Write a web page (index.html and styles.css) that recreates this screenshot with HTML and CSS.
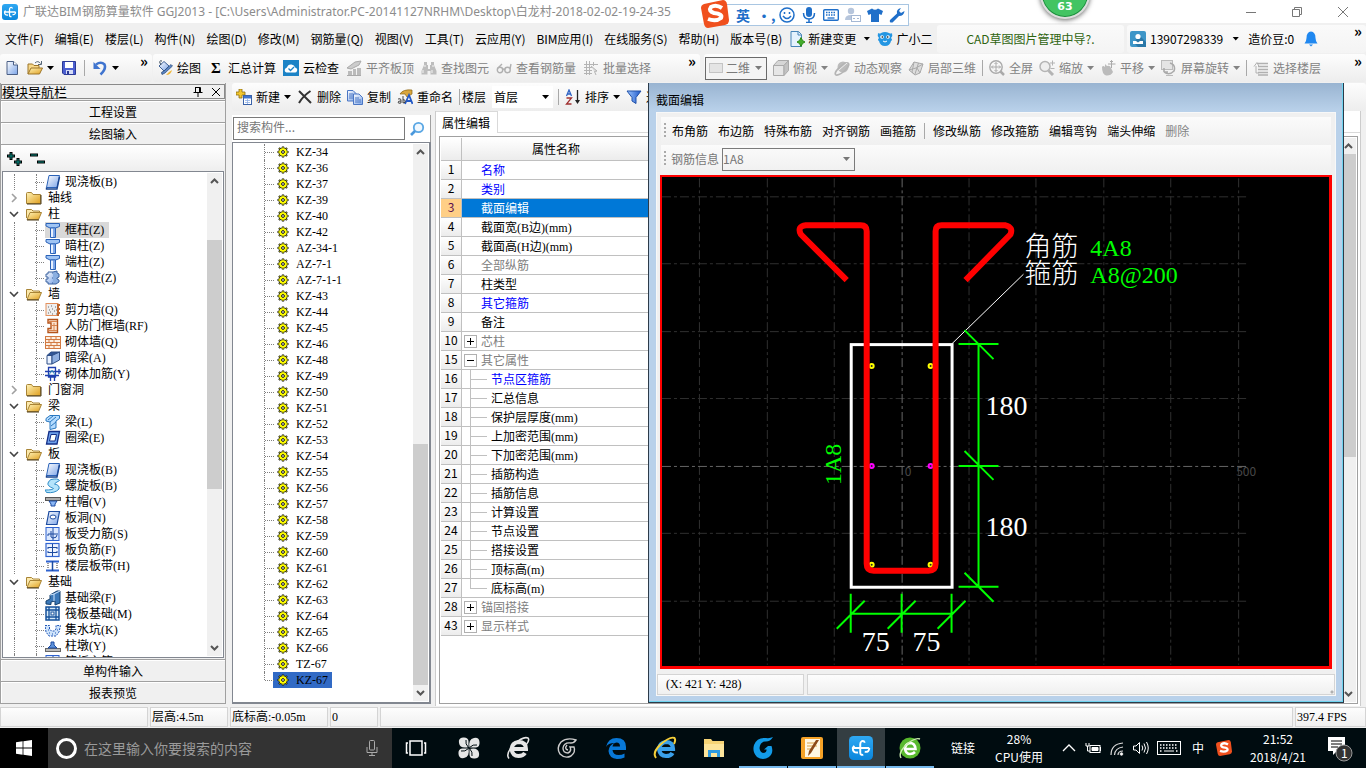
FILE: index.html
```html
<!DOCTYPE html>
<html lang="zh-CN">
<head>
  <meta charset="utf-8">
  <title>广联达BIM钢筋算量软件 GGJ2013</title>
  <link rel="stylesheet" href="styles.css">
</head>
<body>
  <!-- icon sheet -->
  <svg class="sheet" aria-hidden="true">
    <defs>
      <linearGradient id="gBlue" x1="0" y1="0" x2="1" y2="1"><stop offset="0" stop-color="#fff"/><stop offset="1" stop-color="#7ba4e8"/></linearGradient>
      <linearGradient id="gGold" x1="0" y1="0" x2="1" y2="1"><stop offset="0" stop-color="#fff3b8"/><stop offset="1" stop-color="#e0a020"/></linearGradient>
      <linearGradient id="gApp" x1="0" y1="0" x2="0" y2="1"><stop offset="0" stop-color="#2fa8f2"/><stop offset="1" stop-color="#0a86dc"/></linearGradient>
      <linearGradient id="gFun" x1="0" y1="0" x2="1" y2="0"><stop offset="0" stop-color="#9cc6ff"/><stop offset="1" stop-color="#1c56c8"/></linearGradient>
      <linearGradient id="gGray" x1="0" y1="0" x2="1" y2="1"><stop offset="0" stop-color="#eee"/><stop offset="1" stop-color="#bbb"/></linearGradient>
    </defs>
    <symbol id="app" viewBox="0 0 16 16"><rect width="16" height="16" rx="3" fill="url(#gApp)"/><path d="M10.500 4.500Q10 3 8.500 3.500Q7.500 4 7.500 5.500V11Q7.500 13 9.500 12.500M2.500 8H13.500M3.500 6.500L2.500 8Q2.500 11.500 6 11M13.500 8Q13.500 11 10.500 10.500" fill="none" stroke="#fff" stroke-width="1.300"/></symbol>
    <symbol id="new" viewBox="0 0 16 16"><path d="M3 1.500H9.500L13.500 5V14.500H3Z" fill="url(#gBlue)" stroke="#4a5f86"/><path d="M9.500 1.500V5H13.500" fill="#fff" stroke="#4a5f86"/></symbol>
    <symbol id="open" viewBox="0 0 16 16"><path d="M1 14V4H5.500L7 5.500H12V8" fill="#f7d88a" stroke="#9c7428"/><path d="M1 14L4 8H15.500L12.500 14Z" fill="url(#gGold)" stroke="#9c7428"/><path d="M8 3Q11 0 13.500 3.500M14.500 1V4.500H11" fill="none" stroke="#567"/></symbol>
    <symbol id="save" viewBox="0 0 16 16"><path d="M1.500 1.500H14.500V14.500H3L1.500 13Z" fill="#4c5fd0" stroke="#2b3a96"/><rect x="4" y="2" width="8" height="6" fill="#fff"/><rect x="5" y="10" width="7" height="4" fill="#d5dcf6"/><rect x="6" y="11" width="2" height="3" fill="#2b3a96"/></symbol>
    <symbol id="undo" viewBox="0 0 16 16"><path d="M4 4.500Q9 1 12.500 4.500Q14.500 9 8.500 14.500" fill="none" stroke="#3f74cf" stroke-width="2.600"/><path d="M1.500 2V9H8.500Z" fill="#3f74cf"/></symbol>
    <symbol id="paint" viewBox="0 0 16 16"><path d="M2 6L7 1.500L12 6L7 11Z" fill="url(#gBlue)" stroke="#3c5f95"/><path d="M4 5Q1 0 5 1" fill="none" stroke="#345"/><path d="M7 11Q3 12 5 14.500L8 13L15.500 6L14 4.500Z" fill="#5b87c8" stroke="#2c4770" stroke-width=".7"/><path d="M9 15Q14 15 15 10L12 12Z" fill="#f0b83a"/></symbol>
    <symbol id="cloud" viewBox="0 0 16 16"><rect width="16" height="16" fill="#1c83c6"/><path d="M3.500 12.500Q1 11.500 2 9Q3 7.500 4 7.500Q5 4 8.500 4.500Q11.500 5 12 7.500Q15 8.500 14 11Q13.500 12.500 12 12.500Z" fill="#fff"/><path d="M5.500 8.500L7.500 10.500L11 7" fill="none" stroke="#1c83c6" stroke-width="1.300"/></symbol>
    <symbol id="align" viewBox="0 0 16 16"><path d="M1 8L9 2L15 1L13 5L5 9Z" fill="#ccc" stroke="#aaa"/><path d="M2 11H6V15H2ZM7 9H10V15H7ZM11 8H15V15H11Z" fill="#bbb"/><path d="M1 15.500H15" stroke="#aaa"/></symbol>
    <symbol id="binoc" viewBox="0 0 16 16" fill="#bdbdbd"><path d="M3 2H6V5H7V9H9V5H10V2H13V5L15.500 11V14.500H9.500V11H6.500V14.500H.5V11L3 5Z"/><path d="M2 10V13M11 10V13M4 5V7M12 5V7" stroke="#f4f4f4"/></symbol>
    <symbol id="glasses" viewBox="0 0 16 16" fill="none" stroke="#b0b0b0" stroke-width="1.400"><circle cx="4" cy="10" r="2.700"/><circle cx="11.500" cy="10" r="2.700"/><path d="M6.500 10Q8 8 9 10M2 8L6 4M14 9L15 4"/></symbol>
    <symbol id="batch" viewBox="0 0 16 16" fill="none" stroke="#b4b4b4"><path d="M3.500 1V15M6.500 1V15M1 4.500H15M1 7.500H9M1 10.500H9M1 13.500H9M10.500 2V6"/><path d="M8 6L14 11L11.500 11.500L13 15" fill="#ddd"/></symbol>
    <symbol id="cube" viewBox="0 0 16 16" stroke="#aaa"><path d="M.5 5.500H11V15.500H.5Z" fill="#e6e6e6"/><path d="M.5 5.500L5 .5H15.500L11 5.500Z" fill="#d6d6d6"/><path d="M11 5.500L15.500 .5V10.500L11 15.500Z" fill="#c2c2c2"/></symbol>
    <symbol id="orbit" viewBox="0 0 16 16"><circle cx="9" cy="7" r="5.500" fill="#bcbcbc"/><ellipse cx="8" cy="9" rx="8.500" ry="3" transform="rotate(-42 8 9)" fill="none" stroke="#b4b4b4" stroke-width="1.600"/><path d="M5 10L13 3" stroke="#eee"/></symbol>
    <symbol id="mesh" viewBox="0 0 16 16" fill="#ddd" stroke="#aaa"><path d="M1 10L6 2L15 4L12 13L7 15Z"/><path d="M6 2L4 12L7 15M10.500 3L7 14M15 4L8 8L1 10M12 13L9 8"/></symbol>
    <symbol id="full" viewBox="0 0 16 16" fill="none" stroke="#aaa"><circle cx="7" cy="7" r="6.200" stroke-width="1.400"/><path d="M7 2.500V11.500M2.500 7H11.500M5.500 4L7 2.500L8.500 4M5.500 10L7 11.500L8.500 10M4 5.500L2.500 7L4 8.500M10 5.500L11.500 7L10 8.500"/><path d="M11.500 11.500L15 15" stroke-width="2.500"/></symbol>
    <symbol id="zoomi" viewBox="0 0 16 16" fill="none" stroke="#b4b4b4"><circle cx="6" cy="6.500" r="5" stroke-width="1.500" fill="#eee"/><path d="M9.500 10.500L14 15" stroke-width="3"/><path d="M11 3H16M13.500 .5V5.500M11.500 8.500H15.500"/></symbol>
    <symbol id="pan" viewBox="0 0 16 16"><path d="M2 7Q3 5 5 7L5 4L7 6Q10 5 11 8L13 12Q11 16 6 15.500Q2 14 2 7Z" fill="#bbb"/><path d="M11.500 .5V8M8 4H15.500M10 2L11.500 .5L13 2" fill="none" stroke="#aaa"/></symbol>
    <symbol id="rot" viewBox="0 0 16 16"><rect x=".5" y=".5" width="11" height="9" fill="#e4e4e4" stroke="#bbb"/><path d="M3 12Q8 16 13 11Q15 5 9 3M3 12V8M3 12H7" fill="none" stroke="#aaa" stroke-width="1.600"/><path d="M5 15.500H12" stroke="#bbb"/></symbol>
    <symbol id="floors" viewBox="0 0 16 16" fill="none" stroke="#b0b0b0"><path d="M5 3.500H15M5 6.500H15M5 9.500H15M5 12.500H15M5 15H15" stroke-width="1.500"/><path d="M1 6.500L4 2.500L6 6.500M3 6V13H6"/></symbol>
    <symbol id="addnew" viewBox="0 0 16 16"><path d="M3 0H6V3H9V6H6V9H3V6H0V3H3Z" fill="#f2c72e" stroke="#8d6c10" stroke-width=".8"/><rect x="7.500" y="6.500" width="8" height="9" fill="#fff" stroke="#3a62a8"/><path d="M8 7H15V9.500H8Z" fill="#3f74cf"/><path d="M9 11.500H14M9 13.500H14M11.500 10V15" stroke="#8fb0e6" stroke-width=".8"/></symbol>
    <symbol id="cross" viewBox="0 0 16 16"><path d="M2 2L14 14M13.500 2Q6 7 2 14" fill="none" stroke="#333" stroke-width="2"/></symbol>
    <symbol id="copy" viewBox="0 0 16 16" stroke="#4a76c4"><path d="M.5 1.500H6L9 4.500V12H.5Z" fill="url(#gBlue)"/><path d="M6.500 5H12L15.500 8.500V15.500H6.500Z" fill="url(#gBlue)"/><path d="M8 9H12M8 11H14M8 13H14M2 5H6M2 7H6M2 9H6"/></symbol>
    <symbol id="rename" viewBox="0 0 16 16"><path d="M3 5Q6 0 15 1V5L10 8L8 5Z" fill="#d9a63c" stroke="#8a6418" stroke-width=".7"/><path d="M8 15L12 6L15.500 15M9.500 12H14" fill="none" stroke="#2459c5" stroke-width="1.800"/><path d="M1 10Q4 9 4 11V14Q1 15 1 13Q1 12 4 12M6 7V14Q9 14 8 11.500Q7 10 6 11" fill="none" stroke="#333" stroke-width=".9"/></symbol>
    <symbol id="az" viewBox="0 0 16 16" fill="none"><path d="M1.500 7L4 1L6.500 7M2.500 5H5.500" stroke="#2d62c4" stroke-width="1.300"/><path d="M1.500 9H6.500L1.500 15H6.500" stroke="#a03030" stroke-width="1.300"/><path d="M12.500 1V13" stroke="#222" stroke-width="1.300"/><path d="M10 11H15L12.500 15Z" fill="#222"/></symbol>
    <symbol id="funnel" viewBox="0 0 16 16"><path d="M1 2H15L10 8.500V14.500L6 12V8.500Z" fill="url(#gFun)" stroke="#2050a8"/></symbol>
    <symbol id="search" viewBox="0 0 16 16" fill="none"><circle cx="9.500" cy="6.500" r="4.700" stroke="#5aa7e4" stroke-width="1.800" fill="#f0f8ff"/><path d="M6 10L2 14" stroke="#4a98dc" stroke-width="2.600"/></symbol>
    <symbol id="fclosed" viewBox="0 0 16 16"><path d="M.5 3.500Q.5 2.500 1.500 2.500H5.500L7 4.500H14.500V13.500H.5Z" fill="url(#gGold)" stroke="#a88436"/><path d="M15 5V14H1" fill="none" stroke="#4a3a18"/></symbol>
    <symbol id="fopen" viewBox="0 0 16 16"><path d="M.5 12V3.500H5.500L7 5H13.500V7" fill="#fce9ac" stroke="#a88436"/><path d="M1 13.500L4 6.500H15.500L12.500 13.500Z" fill="url(#gGold)" stroke="#a88436"/><path d="M1 14H13" stroke="#4a3a18"/></symbol>
    <symbol id="slab" viewBox="0 0 16 16"><path d="M4 1.500H14.500L12 13.500H1.500Z" fill="url(#gBlue)" stroke="#2a62b8"/><path d="M1.500 13.500V15H12L14.500 3" fill="none" stroke="#1a4590" stroke-width="1.400"/></symbol>
    <symbol id="col" viewBox="0 0 16 16"><path d="M1 1.500H14.500V4.500L10.500 6H5L1 4Z" fill="#9fc4f4" stroke="#2a62b8"/><path d="M5.500 6H10.500V15.500H5.500Z" fill="#e8f1ff" stroke="#2a62b8"/><path d="M9 6V15" stroke="#5c8fe0" stroke-width="1.500"/></symbol>
    <symbol id="gz" viewBox="0 0 16 16" stroke="#3a62a0" fill="url(#gBlue)"><path d="M3 2H8V4H10V7H8V9H10V12H8V14H3V12H1V9H3V7H1V4H3Z"/><path d="M8 2L12 1V3L14 4V7L12 8V9L14 10V12L11 14H8" fill="#8aaee0"/></symbol>
    <symbol id="wallq" viewBox="0 0 16 16"><rect x="1" y="1.500" width="12" height="12" fill="#eee" stroke="#e4915e"/><path d="M3 5H4M6 4H7M10 5H11M4 8H5M7 7H8M9 9H10M3 11H4M5 10H6M7 12H8M11 12H12M11 8H12" stroke="#666"/><path d="M13 2V14M14 3H15M14 7H15M14 11H15" stroke="#c0652c" stroke-width="2"/></symbol>
    <symbol id="wallrf" viewBox="0 0 16 16"><path d="M3 1.500H12.500V14.500H3V10.500H6V5H3Z" fill="#fbe3cf" stroke="#b4541c" stroke-width="1.400"/><path d="M6 7.500H12M3 12.500H12M3 3.500H12M9 5V7M9 8V12" stroke="#d98550"/></symbol>
    <symbol id="brick" viewBox="0 0 16 16"><rect x=".5" y="2.500" width="15" height="12" fill="#fdeee0" stroke="#d27a42"/><path d="M1 5.500H15M1 8.500H15M1 11.500H15M6 3V5M11 3V5M4 6V8M9 6V8M6 9V11M12 9V11M4 12V14M9 12V14" stroke="#d27a42"/></symbol>
    <symbol id="beama" viewBox="0 0 16 16" stroke="#2f4f86"><path d="M2 5.500L6 2H14.500L10 5.500Z" fill="#2f5596"/><path d="M2 5.500H7V14H2Z" fill="#eaf2ff"/><path d="M7 5.500L14.500 2V10L7 14Z" fill="#8eaee0"/></symbol>
    <symbol id="rebar" viewBox="0 0 16 16" fill="none" stroke="#1e3fae"><path d="M3.500 1.500H10.500V11H3.500ZM0 5.500H16M0 9.500H14M5.500 11V15M9.500 11V15M14 3V8" stroke-width="1.300"/><path d="M4 9L7 4L10 9" stroke="#49b"/></symbol>
    <symbol id="beaml" viewBox="0 0 16 16"><path d="M1 4.500L5 1.500H14.500V4.500L11 7V14L5 15.500V8L1 7Z" fill="#b5dcff" stroke="#2a78c0"/><path d="M5 8L11 3M6 12L11 8M3 6L8 2" stroke="#2a78c0"/></symbol>
    <symbol id="ring" viewBox="0 0 16 16"><path d="M4 1.500H14.500L12 14H1.500Z" fill="#6ea0ea" stroke="#142f88" stroke-width="1.300"/><path d="M6 4.500H11.500L10 11H4.500Z" fill="#fff" stroke="#142f88"/></symbol>
    <symbol id="spiral" viewBox="0 0 16 16"><path d="M6 1.500Q13 0 14.500 2.500Q10 5 9.500 6Q15 7 14 11Q10 15.500 1.500 14.500L0 12Q8 12 8.500 10.500Q2 8 3 5Q4 2.500 6 1.500Z" fill="#b4e4fb" stroke="#2f8cc8"/></symbol>
    <symbol id="cap" viewBox="0 0 16 16"><rect x=".5" y="3.500" width="15" height="3" fill="#aaa" stroke="#555"/><path d="M4 7H12L10 10V12H6V10Z" fill="#8ab6f4" stroke="#1c4ba0"/></symbol>
    <symbol id="hole" viewBox="0 0 16 16"><path d="M4 1.500H14.500L12 14.500H1.500Z" fill="url(#gBlue)" stroke="#1c4ba0" stroke-width="1.200"/><ellipse cx="8" cy="7" rx="3" ry="2" fill="#fff" stroke="#1c4ba0"/></symbol>
    <symbol id="stress" viewBox="0 0 16 16"><rect x="1" y="1.500" width="13" height="13" fill="#dce9ff" stroke="#2f63d0"/><path d="M8 2V14M3 8H13M3 8V10M6 5V8Q5 12 8 12Q12 12 12 9" fill="none" stroke="#1c4ba0"/></symbol>
    <symbol id="neg" viewBox="0 0 16 16"><rect x="1" y="1.500" width="13" height="13" fill="#eef4ff" stroke="#2f63d0" stroke-width="1.200"/><path d="M7.500 2V14M3 5.500H12M3 10.500H12M3 5V7M12 5V7M3 9V11M12 9V11" stroke="#1c4ba0"/></symbol>
    <symbol id="band" viewBox="0 0 16 16"><path d="M1 3.500H14M1 12.500H14" stroke="#2f63d0" stroke-width="2"/><path d="M7.500 3V13" stroke="#1c4ba0" stroke-width="1.500"/><path d="M3 5V11M12 5V11" stroke="#333" stroke-dasharray="1 1"/></symbol>
    <symbol id="found" viewBox="0 0 16 16"><path d="M1 14V11L5 9V5L12 1H15V13L10 15V11L6 12V14.500Z" fill="#3b78b8" stroke="#14406e"/><path d="M5 5L9 4V11M9 4L15 1" fill="none" stroke="#cfe6ff"/></symbol>
    <symbol id="raft" viewBox="0 0 16 16"><rect x="1" y="1" width="13" height="13" fill="#d7ebf8" stroke="#14509a" stroke-width="1.500"/><path d="M4 1V14M11 1V14M1 4H14M1 11H14" stroke="#14509a" stroke-width="1.300"/><rect x="6" y="6" width="3" height="3" fill="#fff" stroke="#14509a"/></symbol>
    <symbol id="pit" viewBox="0 0 16 16"><path d="M0 3.500H4.500V7L6.500 9H9.500L11 7V3.500H15.500L14 10L11 14H4L1 10Z" fill="#cfe4fb" stroke="#2358b8" stroke-dasharray="2 1"/><path d="M4 11H5M7 12H8M10 11H11M3 8H4M12 8H13" stroke="#2358b8"/></symbol>
    <symbol id="pier" viewBox="0 0 16 16"><rect x=".5" y="10.500" width="15" height="3" fill="#bbb" stroke="#666"/><path d="M3 10L6 7V4H9V7L12 10Z" fill="#5c90d8" stroke="#1c4ba0"/></symbol>
    <symbol id="gear" viewBox="0 0 12 12"><path d="M6 .5V11.500M.5 6H11.500M2 2L10 10M10 2L2 10" stroke="#111" stroke-width="2.200"/><circle cx="6" cy="6" r="4.200" fill="#ff0" stroke="#222" stroke-width=".9"/><path d="M6 1V11M1 6H11M2.500 2.500L9.500 9.500M9.500 2.500L2.500 9.500" stroke="#ff0" stroke-width=".9"/><circle cx="6" cy="6" r="1.400" fill="#fff" stroke="#111"/></symbol>
    <symbol id="sogou" viewBox="0 0 28 28"><path d="M3 4L22 0Q25 0 26 4L28 20Q28 24 24 25L7 28Q4 28 3 24L0 8Q0 5 3 4Z" fill="#f0501e"/><path d="M21 8Q15 4 10 7Q7 11 13 13Q22 14 20 18Q15 22 7 19" fill="none" stroke="#fff" stroke-width="4"/></symbol>
    <symbol id="smile" viewBox="0 0 16 16" fill="none" stroke="#1f6fc9" stroke-width="1.500"><circle cx="8" cy="8" r="7"/><path d="M4 9Q8 14 12 9M5.500 5V7M10.500 5V7"/></symbol>
    <symbol id="mic" viewBox="0 0 16 16"><rect x="5" y="0" width="6" height="10" rx="3" fill="#1f6fc9"/><path d="M2.500 6Q2.500 12 8 12Q13.500 12 13.500 6M8 12V15.500M5 15.500H11" fill="none" stroke="#1f6fc9" stroke-width="1.500"/></symbol>
    <symbol id="kbd" viewBox="0 0 16 16"><rect x=".7" y="2.700" width="14.600" height="10.600" rx="1" fill="#fff" stroke="#1f6fc9" stroke-width="1.400"/><path d="M3 5.500H13M3 8H13" stroke="#1f6fc9" stroke-width="1.500" stroke-dasharray="1.500 1"/><path d="M4.500 11H11.500" stroke="#1f6fc9" stroke-width="1.300"/></symbol>
    <symbol id="person" viewBox="0 0 16 16"><circle cx="6" cy="4" r="3.200" fill="#b7c6dc"/><path d="M0 13Q0 8 6 8Q9 8 10 9V13Z" fill="#b7c6dc"/><rect x="6.500" y="8.500" width="9" height="6" fill="#fff" stroke="#a5b8d4"/><path d="M8 11.500H10M12 11.500H14" stroke="#a5b8d4"/></symbol>
    <symbol id="shirt" viewBox="0 0 16 16"><path d="M5 1.500Q8 4 11 1.500L16 4L14.500 8L12 7V15H4V7L1.500 8L0 4Z" fill="#1f6fc9"/></symbol>
    <symbol id="wrench" viewBox="0 0 16 16"><path d="M1 13L8 6.500Q7 2 12 1L10 4L12 6L15.500 4Q15 9 10 9L3.500 15.500Q0 16 1 13Z" fill="#1f6fc9"/></symbol>
    <symbol id="docadd" viewBox="0 0 16 16"><path d="M2 .5H9.500L12.500 3.500V15.500H2Z" fill="#e5f2fd" stroke="#4784b8"/><path d="M9 .5V4H12.500" fill="none" stroke="#4784b8"/><path d="M12 6.500L13.500 9.500L16 11L13.500 12.500L12 15.500L10.500 12.500L8 11L10.500 9.500Z" fill="#44ac2c" stroke="#2c8a18" stroke-width="1"/></symbol>
    <symbol id="owl" viewBox="0 0 16 16"><path d="M1 2Q3 3 4 2Q8 0 12 2Q14 3 15 2Q16 5 14 7Q16 9 14 10Q13 15 8 15Q3 15 2 10Q0 9 2 7Q0 5 1 2Z" fill="#2496e2"/><circle cx="5" cy="6" r="1.800" fill="#fff"/><circle cx="11" cy="6" r="1.800" fill="#fff"/><circle cx="5.300" cy="6" r=".8"/><circle cx="10.700" cy="6" r=".8"/><path d="M6 10Q8 12 10 10" stroke="#fff" fill="none"/></symbol>
    <symbol id="user" viewBox="0 0 16 16"><rect width="16" height="16" rx="2" fill="#3e96c8"/><path d="M9 4L16 11V16H8L4 12Z" fill="#2a78a8"/><circle cx="8" cy="5.500" r="2.600" fill="#fff"/><path d="M3 10H6L8 11.500L10 10H13V13H3Z" fill="#fff"/></symbol>
    <symbol id="bell" viewBox="0 0 16 16"><path d="M8 .5Q12.500 1 12.500 7Q12.500 10 14.500 12.500H1.500Q3.500 10 3.500 7Q3.500 1 8 .5Z" fill="#2088f0"/><path d="M6 13.500H10L8 15.500Z" fill="#2088f0"/></symbol>
    <symbol id="up" viewBox="0 0 15 16"><path d="M4 10L7.500 6.500L11 10" fill="none" stroke="#555" stroke-width="2"/></symbol>
    <symbol id="down" viewBox="0 0 15 16"><path d="M4 6L7.500 9.500L11 6" fill="none" stroke="#555" stroke-width="2"/></symbol>
    <symbol id="twOpen" viewBox="0 0 12 12"><path d="M2 4L6 8L10 4" fill="none" stroke="#444" stroke-width="1.600"/></symbol>
    <symbol id="twShut" viewBox="0 0 12 12"><path d="M4 2L8 6L4 10" fill="none" stroke="#a0a0a0" stroke-width="1.600"/></symbol>
    <!-- taskbar -->
    <symbol id="win" viewBox="0 0 16 16" fill="#fff"><path d="M0 2.200L6.600 1.300V7.500H0ZM7.400 1.200L16 0V7.500H7.400ZM0 8.400H6.600V14.700L0 13.800ZM7.400 8.400H16V16L7.400 14.800Z"/></symbol>
    <symbol id="taskview" viewBox="0 0 24 24" fill="none" stroke="#fff" stroke-width="1.500"><rect x="6" y="5" width="12" height="14"/><path d="M4 7H2.500V17H4M20 7H21.500V17H20"/></symbol>
    <symbol id="pinwheel" viewBox="0 0 24 24" fill="#e6e6e6"><path d="M2 7Q1 2 6 1.500Q11 1 11.500 5V11Q3 13 2 7ZM17 2Q22 1 22.500 6Q23 11 19 11.500H12.500Q11 3 17 2ZM22 17Q23 22 18 22.500Q13 23 12.500 19V13Q21 11 22 17ZM7 22Q2 23 1.500 18Q1 13 5 12.500H11.500Q13 21 7 22Z"/><path d="M11.500 11.500Q8 8 9 4M12.500 11.500Q16 8 20 9M12.500 12.500Q16 16 15 20M11.500 12.500Q8 16 4 15" stroke="#000c10" fill="none"/></symbol>
    <symbol id="iew" viewBox="0 0 24 24" fill="none" stroke="#e6e6e6"><path d="M5.500 13H20Q20 6 12.500 6Q6 7 5.500 13Q6.500 20 12.500 20Q17 20 19 17" stroke-width="4"/><path d="M3 22.500Q-1 18 8 8.500Q17 0 22 2Q24 4 20 9" stroke-width="1.600"/></symbol>
    <symbol id="swirl" viewBox="0 0 24 24" fill="none" stroke="#ccc"><path d="M21 4Q12 1 6 6Q1 12 5 18Q10 23 16 20Q21 16 19 11H15Q17 15 13 17Q8 17 8 12Q9 6 16 7Q19 7 21 4Z" stroke-width="1.400"/><path d="M12 9Q9 13 13 14" stroke-width="1.300"/></symbol>
    <symbol id="edge" viewBox="0 0 24 24"><path d="M2 11Q4 2 12.500 2Q22 2 22 11V14H8.500Q9 19 14.500 19Q18 19 20.500 17.500V21.500Q17 23 13 23Q5 22 4.500 15Q5 9 10.500 7Q4 7 2 11ZM8.500 10.500H16Q16 6.500 12.500 6.500Q9 7 8.500 10.500Z" fill="#0878d7"/></symbol>
    <symbol id="ie" viewBox="0 0 24 24" fill="none"><path d="M6 13H20Q20 6 13 6Q6.500 7 6 13Q7 20 13 20Q18 20 19.500 17" stroke="#3aa0ea" stroke-width="4.200"/><path d="M3 22Q-1 17 7 9Q17 0 21.500 2Q23 4 21 8" stroke="#f4cf3a" stroke-width="2"/></symbol>
    <symbol id="files" viewBox="0 0 24 24"><path d="M2 3H9L10.500 5H22V20H2Z" fill="#f6d476"/><path d="M2 8H22V21H2Z" fill="#fde59b"/><path d="M6 21V14H18V21H15V17H9V21Z" fill="#2f9be0"/></symbol>
    <symbol id="gblue" viewBox="0 0 24 24"><path d="M22 1Q19 6 14 5.500Q9 6 8.500 12Q9 17 13 17Q16 16.500 15.500 13.500H13L17 10H20.500Q23 17 18 21Q12 25 6 21Q1 16 3 9Q6 1 15 2Q19 2.500 22 1Z" fill="#129be8"/></symbol>
    <symbol id="notes" viewBox="0 0 24 24"><rect x="1" y="1" width="22" height="22" rx="2" fill="#f6a327"/><rect x="5" y="3" width="15" height="18" fill="#fff8e4"/><path d="M7 7H17M7 10H17M7 13H12" stroke="#d9a24a"/><path d="M19 4L11 17L8 20L9 15L16 4Z" fill="#8c4a1a"/></symbol>
    <symbol id="egreen" viewBox="0 0 24 24" fill="none"><circle cx="12" cy="12" r="10.500" fill="#58b92c"/><path d="M7 13H17.500Q17 7 12 7Q7 8 7 13Q8 18 12 18Q15 18 17 16" stroke="#fff" stroke-width="2.600"/><path d="M3 22Q0 17 8 9Q17 1 22 3" stroke="#cdeeb0" stroke-width="1.400"/></symbol>
    <symbol id="battery" viewBox="0 0 16 16" fill="none" stroke="#fff"><rect x="5" y="5.500" width="10" height="7" /><path d="M7 7.500H13V10.500H7Z" fill="#fff"/><path d="M1 3V6H4V3M2.500 6V11H5M15.500 7V11"/></symbol>
    <symbol id="wifi" viewBox="0 0 16 16" fill="none" stroke="#ddd"><path d="M2 15Q2 4 14 3M5.500 15Q6 8 14 7M9 15Q9 11 14 11" stroke-width="1.200"/><circle cx="12.500" cy="14" r="1.300" fill="#fff"/></symbol>
    <symbol id="vol" viewBox="0 0 16 16" fill="none" stroke="#fff"><path d="M.5 6H3L6.500 2.500V13.500L3 10H.5ZM9 5.500Q10.500 8 9 10.500M11 3.500Q14 8 11 12.500M13.500 2Q17 8 13.500 14"/></symbol>
    <symbol id="kbw" viewBox="0 0 24 16" fill="none" stroke="#fff"><rect x=".5" y="1.500" width="23" height="13"/><path d="M3 5H21M3 8H21M3 11H5M19 11H21" stroke-dasharray="1.500 1.500" stroke-width="1.500"/><path d="M7 11H17"/></symbol>
    <symbol id="note" viewBox="0 0 28 28"><path d="M2 3H19V17H11L7 21V17H2Z" fill="#fff"/><path d="M5 7H16M5 10H16M5 13H12" stroke="#000"/><circle cx="18" cy="19" r="8" fill="#333" stroke="#999"/></symbol>
  </svg>

  <header class="titlebar">
    <svg class="ico"><use href="#app"/></svg>
    <h1>广联达BIM钢筋算量软件 GGJ2013 - [C:\Users\Administrator.PC-20141127NRHM\Desktop\白龙村-2018-02-02-19-24-35</h1>
    <div class="win-controls">
      <button aria-label="最小化"><svg viewBox="0 0 12 12"><path d="M1 6.500H11"/></svg></button>
      <button aria-label="还原"><svg viewBox="0 0 12 12"><path d="M1.500 3.500H8.500V10.500H1.500ZM3.500 3V1.500H10.500V8.500H9"/></svg></button>
      <button aria-label="关闭"><svg viewBox="0 0 12 12"><path d="M1 1L11 11M11 1L1 11"/></svg></button>
    </div>
  </header>

  <div class="ime">
    <svg class="ime-logo"><use href="#sogou"/></svg>
    <b>英</b>
    <b>•,</b>
    <svg class="ico"><use href="#smile"/></svg>
    <svg class="ico"><use href="#mic"/></svg>
    <svg class="ico"><use href="#kbd"/></svg>
    <svg class="ico"><use href="#person"/></svg>
    <svg class="ico"><use href="#shirt"/></svg>
    <svg class="ico"><use href="#wrench"/></svg>
  </div>
  <div class="bubble">63</div>

  <nav class="menubar">
    <div class="menus">
      <button>文件(F)</button><button>编辑(E)</button><button>楼层(L)</button><button>构件(N)</button><button>绘图(D)</button><button>修改(M)</button><button>钢筋量(Q)</button><button>视图(V)</button><button>工具(T)</button><button>云应用(Y)</button><button>BIM应用(I)</button><button>在线服务(S)</button><button>帮助(H)</button><button>版本号(B)</button>
      <button class="extra"><svg class="ico"><use href="#docadd"/></svg>新建变更<i class="caret"></i></button>
      <button class="extra"><svg class="ico"><use href="#owl"/></svg>广小二</button>
    </div>
    <div class="news"><a href="#">CAD草图图片管理中导?.</a></div>
    <div class="account">
      <button><svg class="ico"><use href="#user"/></svg>13907298339<i class="caret"></i></button>
      <span>造价豆:0</span>
      <svg class="ico"><use href="#bell"/></svg>
      <button class="more">»</button>
    </div>
  </nav>

  <div class="toolbars">
    <div class="bar bar-file">
      <button aria-label="新建"><svg class="ico"><use href="#new"/></svg></button>
      <button aria-label="打开"><svg class="ico"><use href="#open"/></svg><i class="caret"></i></button>
      <button aria-label="保存"><svg class="ico"><use href="#save"/></svg></button>
      <span class="sep"></span>
      <button aria-label="撤销"><svg class="ico"><use href="#undo"/></svg><i class="caret"></i></button>
      <button class="more">»</button>
    </div>
    <div class="bar bar-draw">
      <button><svg class="ico"><use href="#paint"/></svg>绘图</button>
      <button><b class="sigma">Σ</b>汇总计算</button>
      <button><svg class="ico"><use href="#cloud"/></svg>云检查</button>
      <button disabled><svg class="ico"><use href="#align"/></svg>平齐板顶</button>
      <button disabled><svg class="ico"><use href="#binoc"/></svg>查找图元</button>
      <button disabled><svg class="ico"><use href="#glasses"/></svg>查看钢筋量</button>
      <button disabled><svg class="ico"><use href="#batch"/></svg>批量选择</button>
      <button class="more">»</button>
    </div>
    <div class="bar bar-view">
      <label class="combo view-mode"><i class="swatch"></i><select disabled aria-label="视图模式"><option>二维</option></select><i class="caret"></i></label>
      <button disabled><svg class="ico"><use href="#cube"/></svg>俯视<i class="caret"></i></button>
      <button disabled><svg class="ico"><use href="#orbit"/></svg>动态观察</button>
      <button disabled><svg class="ico"><use href="#mesh"/></svg>局部三维</button>
      <span class="sep"></span>
      <button disabled><svg class="ico"><use href="#full"/></svg>全屏</button>
      <button disabled><svg class="ico"><use href="#zoomi"/></svg>缩放<i class="caret"></i></button>
      <button disabled><svg class="ico"><use href="#pan"/></svg>平移<i class="caret"></i></button>
      <button disabled><svg class="ico"><use href="#rot"/></svg>屏幕旋转<i class="caret"></i></button>
      <span class="sep"></span>
      <button disabled><svg class="ico"><use href="#floors"/></svg>选择楼层</button>
      <button class="more">»</button>
    </div>
  </div>

  <main class="workspace">
    <aside class="nav">
      <div class="nav-head"><span>模块导航栏</span>
        <svg viewBox="0 0 12 12"><path d="M3.500 1.500H8.500V6.500M3.500 1V6.500M1.500 6.500H10.500M6 7V11M7.500 2V6"/></svg>
        <svg viewBox="0 0 12 12"><path d="M2 2L10 10M10 2L2 10"/></svg>
      </div>
      <button class="nav-tab">工程设置</button>
      <button class="nav-tab">绘图输入</button>
      <div class="nav-tools">
        <svg viewBox="0 0 40 16"><path d="M5 1V9M1 5H9M12 7V15M8 11H16M24 4H32M31 11H39" stroke="#000" stroke-width="3"/><path d="M5 2V8M2 5H8M12 8V14M9 11H15M25 4H31M32 11H38" stroke="#0a8a80"/></svg>
      </div>
      <div class="tree-box">
        <ul class="tree">
          <li class="leaf last"><svg class="ico"><use href="#slab"/></svg><span>现浇板(B)</span></li>
          <li><svg class="tw"><use href="#twShut"/></svg><svg class="ico"><use href="#fclosed"/></svg>轴线</li>
          <li><svg class="tw"><use href="#twOpen"/></svg><svg class="ico"><use href="#fopen"/></svg>柱</li>
          <li class="leaf current"><svg class="ico"><use href="#col"/></svg><span>框柱(Z)</span></li>
          <li class="leaf"><svg class="ico"><use href="#col"/></svg><span>暗柱(Z)</span></li>
          <li class="leaf"><svg class="ico"><use href="#col"/></svg><span>端柱(Z)</span></li>
          <li class="leaf last"><svg class="ico"><use href="#gz"/></svg><span>构造柱(Z)</span></li>
          <li><svg class="tw"><use href="#twOpen"/></svg><svg class="ico"><use href="#fopen"/></svg>墙</li>
          <li class="leaf"><svg class="ico"><use href="#wallq"/></svg><span>剪力墙(Q)</span></li>
          <li class="leaf"><svg class="ico"><use href="#wallrf"/></svg><span>人防门框墙(RF)</span></li>
          <li class="leaf"><svg class="ico"><use href="#brick"/></svg><span>砌体墙(Q)</span></li>
          <li class="leaf"><svg class="ico"><use href="#beama"/></svg><span>暗梁(A)</span></li>
          <li class="leaf last"><svg class="ico"><use href="#rebar"/></svg><span>砌体加筋(Y)</span></li>
          <li><svg class="tw"><use href="#twShut"/></svg><svg class="ico"><use href="#fclosed"/></svg>门窗洞</li>
          <li><svg class="tw"><use href="#twOpen"/></svg><svg class="ico"><use href="#fopen"/></svg>梁</li>
          <li class="leaf"><svg class="ico"><use href="#beaml"/></svg><span>梁(L)</span></li>
          <li class="leaf last"><svg class="ico"><use href="#ring"/></svg><span>圈梁(E)</span></li>
          <li><svg class="tw"><use href="#twOpen"/></svg><svg class="ico"><use href="#fopen"/></svg>板</li>
          <li class="leaf"><svg class="ico"><use href="#slab"/></svg><span>现浇板(B)</span></li>
          <li class="leaf"><svg class="ico"><use href="#spiral"/></svg><span>螺旋板(B)</span></li>
          <li class="leaf"><svg class="ico"><use href="#cap"/></svg><span>柱帽(V)</span></li>
          <li class="leaf"><svg class="ico"><use href="#hole"/></svg><span>板洞(N)</span></li>
          <li class="leaf"><svg class="ico"><use href="#stress"/></svg><span>板受力筋(S)</span></li>
          <li class="leaf"><svg class="ico"><use href="#neg"/></svg><span>板负筋(F)</span></li>
          <li class="leaf last"><svg class="ico"><use href="#band"/></svg><span>楼层板带(H)</span></li>
          <li><svg class="tw"><use href="#twOpen"/></svg><svg class="ico"><use href="#fopen"/></svg>基础</li>
          <li class="leaf"><svg class="ico"><use href="#found"/></svg><span>基础梁(F)</span></li>
          <li class="leaf"><svg class="ico"><use href="#raft"/></svg><span>筏板基础(M)</span></li>
          <li class="leaf"><svg class="ico"><use href="#pit"/></svg><span>集水坑(K)</span></li>
          <li class="leaf"><svg class="ico"><use href="#pier"/></svg><span>柱墩(Y)</span></li>
          <li class="leaf"><svg class="ico"><use href="#stress"/></svg><span>筏板主筋(R)</span></li>
        </ul>
        <div class="scroll scroll-tree"><button aria-label="上"><svg><use href="#up"/></svg></button><i></i><b></b><em></em><button aria-label="下"><svg><use href="#down"/></svg></button></div>
      </div>
      <button class="nav-tab">单构件输入</button>
      <button class="nav-tab">报表预览</button>
    </aside>

    <section class="work">
      <div class="bar bar-item">
        <button><svg class="ico"><use href="#addnew"/></svg>新建<i class="caret"></i></button>
        <button><svg class="ico"><use href="#cross"/></svg>删除</button>
        <button><svg class="ico"><use href="#copy"/></svg>复制</button>
        <button><svg class="ico"><use href="#rename"/></svg>重命名</button>
        <span class="sep"></span>
        <label for="floor">楼层</label>
        <span class="combo floor"><select id="floor"><option>首层</option></select><i class="caret"></i></span>
        <span class="sep"></span>
        <button><svg class="ico"><use href="#az"/></svg>排序<i class="caret"></i></button>
        <button><svg class="ico"><use href="#funnel"/></svg>过滤</button>
      </div>
      <div class="panes">
        <div class="items">
          <div class="find"><input type="text" placeholder="搜索构件..." aria-label="搜索构件"><button aria-label="搜索"><svg class="ico"><use href="#search"/></svg></button></div>
          <div class="items-box">
            <ul class="item-list">
              <li><svg><use href="#gear"/></svg>KZ-34</li>
              <li><svg><use href="#gear"/></svg>KZ-36</li>
              <li><svg><use href="#gear"/></svg>KZ-37</li>
              <li><svg><use href="#gear"/></svg>KZ-39</li>
              <li><svg><use href="#gear"/></svg>KZ-40</li>
              <li><svg><use href="#gear"/></svg>KZ-42</li>
              <li><svg><use href="#gear"/></svg>AZ-34-1</li>
              <li><svg><use href="#gear"/></svg>AZ-7-1</li>
              <li><svg><use href="#gear"/></svg>AZ-7-1-1</li>
              <li><svg><use href="#gear"/></svg>KZ-43</li>
              <li><svg><use href="#gear"/></svg>KZ-44</li>
              <li><svg><use href="#gear"/></svg>KZ-45</li>
              <li><svg><use href="#gear"/></svg>KZ-46</li>
              <li><svg><use href="#gear"/></svg>KZ-48</li>
              <li><svg><use href="#gear"/></svg>KZ-49</li>
              <li><svg><use href="#gear"/></svg>KZ-50</li>
              <li><svg><use href="#gear"/></svg>KZ-51</li>
              <li><svg><use href="#gear"/></svg>KZ-52</li>
              <li><svg><use href="#gear"/></svg>KZ-53</li>
              <li><svg><use href="#gear"/></svg>KZ-54</li>
              <li><svg><use href="#gear"/></svg>KZ-55</li>
              <li><svg><use href="#gear"/></svg>KZ-56</li>
              <li><svg><use href="#gear"/></svg>KZ-57</li>
              <li><svg><use href="#gear"/></svg>KZ-58</li>
              <li><svg><use href="#gear"/></svg>KZ-59</li>
              <li><svg><use href="#gear"/></svg>KZ-60</li>
              <li><svg><use href="#gear"/></svg>KZ-61</li>
              <li><svg><use href="#gear"/></svg>KZ-62</li>
              <li><svg><use href="#gear"/></svg>KZ-63</li>
              <li><svg><use href="#gear"/></svg>KZ-64</li>
              <li><svg><use href="#gear"/></svg>KZ-65</li>
              <li><svg><use href="#gear"/></svg>KZ-66</li>
              <li><svg><use href="#gear"/></svg>TZ-67</li>
              <li class="selected"><svg><use href="#gear"/></svg>KZ-67</li>
            </ul>
            <div class="scroll scroll-items"><button aria-label="上"><svg><use href="#up"/></svg></button><i></i><b></b><button aria-label="下"><svg><use href="#down"/></svg></button></div>
          </div>
        </div>

        <div class="props">
          <div class="tabs"><button>属性编辑</button></div>
          <div class="props-box">
            <div class="props-grid">
              <table>
                <thead><tr><th class="num"></th><th class="name">属性名称</th><th></th></tr></thead>
                <tbody>
                  <tr><td>1</td><td class="key">名称</td><td></td></tr>
                  <tr><td>2</td><td class="key">类别</td><td></td></tr>
                  <tr class="active"><td>3</td><td>截面编辑</td><td></td></tr>
                  <tr><td>4</td><td>截面宽(B边)(mm)</td><td></td></tr>
                  <tr><td>5</td><td>截面高(H边)(mm)</td><td></td></tr>
                  <tr><td>6</td><td class="dim">全部纵筋</td><td></td></tr>
                  <tr><td>7</td><td>柱类型</td><td></td></tr>
                  <tr><td>8</td><td class="key">其它箍筋</td><td></td></tr>
                  <tr><td>9</td><td>备注</td><td></td></tr>
                  <tr><td>10</td><td class="dim group"><i class="box plus"></i>芯柱</td><td></td></tr>
                  <tr><td>15</td><td class="dim group"><i class="box"></i>其它属性</td><td></td></tr>
                  <tr><td>16</td><td class="key sub">节点区箍筋</td><td></td></tr>
                  <tr><td>17</td><td class="sub">汇总信息</td><td></td></tr>
                  <tr><td>18</td><td class="sub">保护层厚度(mm)</td><td></td></tr>
                  <tr><td>19</td><td class="sub">上加密范围(mm)</td><td></td></tr>
                  <tr><td>20</td><td class="sub">下加密范围(mm)</td><td></td></tr>
                  <tr><td>21</td><td class="sub">插筋构造</td><td></td></tr>
                  <tr><td>22</td><td class="sub">插筋信息</td><td></td></tr>
                  <tr><td>23</td><td class="sub">计算设置</td><td></td></tr>
                  <tr><td>24</td><td class="sub">节点设置</td><td></td></tr>
                  <tr><td>25</td><td class="sub">搭接设置</td><td></td></tr>
                  <tr><td>26</td><td class="sub">顶标高(m)</td><td></td></tr>
                  <tr><td>27</td><td class="sub end">底标高(m)</td><td></td></tr>
                  <tr><td>28</td><td class="dim group"><i class="box plus"></i>锚固搭接</td><td></td></tr>
                  <tr><td>43</td><td class="dim group"><i class="box plus"></i>显示样式</td><td></td></tr>
                </tbody>
              </table>
            </div>
            <div class="scroll scroll-props"><button aria-label="上"><svg><use href="#up"/></svg></button><b></b><em></em><button aria-label="下"><svg><use href="#down"/></svg></button></div>
          </div>
        </div>
      </div>
    </section>

    <!-- section editor window -->
    <section class="dialog">
      <h2>截面编辑</h2>
      <div class="dialog-body">
        <div class="dbar">
          <i class="grip"></i>
          <button>布角筋</button><button>布边筋</button><button>特殊布筋</button><button>对齐钢筋</button><button>画箍筋</button>
          <span class="sep"></span>
          <button>修改纵筋</button><button>修改箍筋</button><button>编辑弯钩</button><button>端头伸缩</button><button disabled>删除</button>
        </div>
        <div class="dbar dbar-info">
          <i class="grip"></i>
          <label for="rebarInfo">钢筋信息</label>
          <span class="combo info"><select id="rebarInfo" disabled><option>1A8</option></select><i class="caret"></i></span>
        </div>
        <svg class="cad" viewBox="662 178 668 487">
          <g class="grid">
            <path d="M699.500 178V665M767.500 178V665M834.500 178V665M969.500 178V665M1036.500 178V665M1104.500 178V665M1171.500 178V665M1239.500 178V665"/>
            <path d="M662 196.500H1250M662 263.500H1250M662 331.500H1250M662 398.500H1250M662 533.500H1250M662 601.500H1250"/>
            <path class="axis" d="M902.500 178V665M662 466.500H1250"/>
          </g>
          <text class="tick" x="905" y="476">0</text>
          <text class="tick" x="1237" y="476">500</text>
          <rect x="851.500" y="344.500" width="101" height="243" fill="none" stroke="#fff" stroke-width="3"/>
          <path d="M952 344L1024 274" stroke="#fff"/>
          <g class="corner"><circle cx="872" cy="366" r="2"/><circle cx="931" cy="366" r="2"/><circle cx="872" cy="565" r="2"/><circle cx="931" cy="565" r="2"/></g>
          <g class="side"><circle cx="872" cy="466" r="2"/><circle cx="931" cy="466" r="2"/></g>
          <path class="stirrup" d="M847 280L801 234Q797 226 806 225H861Q867 225 867 231V564Q867 571 874 571H929Q936 571 936 564V231Q936 225 942 225H1006Q1014 227 1011 234L966 280"/>
          <path class="measure" d="M979 344V587M959 344H999M959 466H999M959 587H999M965 330L994 359M965 451L994 480M965 573L994 602"/>
          <path class="measure" d="M851 614H952M851 594V633M902 594V633M952 594V633M865 601L837 629M916 601L888 629M966 601L938 629"/>
          <text class="cn" x="1025" y="256">角筋</text>
          <text class="cn" x="1025" y="283">箍筋</text>
          <text class="spec" x="1091" y="256">4A8</text>
          <text class="spec" x="1091" y="283">A8@200</text>
          <text class="size" x="986" y="415">180</text>
          <text class="size" x="986" y="536">180</text>
          <text class="size" x="862" y="651">75</text>
          <text class="size" x="913" y="651">75</text>
          <text class="spec" transform="translate(841 485) rotate(-90)">1A8</text>
        </svg>
        <div class="dstatus"><span>(X: 421 Y: 428)</span><span></span></div>
      </div>
    </section>
  </main>

  <footer class="statusbar">
    <span class="s-hint"></span><span class="s-height">层高:4.5m</span><span class="s-base">底标高:-0.05m</span><span class="s-count">0</span><span class="s-msg"></span><span class="s-fps">397.4 FPS</span>
  </footer>

  <div class="taskbar">
    <button class="start" aria-label="开始"><svg class="ico"><use href="#win"/></svg></button>
    <label class="cortana"><i></i><input type="text" placeholder="在这里输入你要搜索的内容"><svg viewBox="0 0 16 16"><rect x="5.500" y=".5" width="5" height="9.500" rx="1"/><path d="M3 7V12.500H13V7M8 12.500V15.500M5 15.500H11"/></svg></label>
    <div class="apps">
      <button><svg><use href="#taskview"/></svg></button>
      <button><svg><use href="#pinwheel"/></svg></button>
      <button><svg><use href="#iew"/></svg></button>
      <button><svg><use href="#swirl"/></svg></button>
      <button><svg><use href="#edge"/></svg></button>
      <button><svg><use href="#ie"/></svg></button>
      <button><svg><use href="#files"/></svg></button>
      <button class="run"><svg><use href="#gblue"/></svg></button>
      <button class="run"><svg><use href="#notes"/></svg></button>
      <button class="run front"><svg><use href="#app"/></svg></button>
      <button class="run"><svg><use href="#egreen"/></svg></button>
    </div>
    <div class="tray">
      <span>链接</span>
      <span class="two cpu">28%<br>CPU使用</span>
      <svg class="ico" viewBox="0 0 16 16"><path d="M2 11L8 5L14 11" fill="none" stroke="#fff" stroke-width="1.300"/></svg>
      <svg class="ico"><use href="#battery"/></svg>
      <svg class="ico"><use href="#wifi"/></svg>
      <svg class="ico"><use href="#vol"/></svg>
      <svg class="kbw"><use href="#kbw"/></svg>
      <span class="lang">中</span>
      <svg class="ico"><use href="#sogou"/></svg>
      <span class="two clock">21:52<br>2018/4/21</span>
      <span class="notice"><svg><use href="#note"/></svg><b>1</b></span>
    </div>
  </div>
</body>
</html>
```
FILE: styles.css
```css
:root {
  --face: #f0f0f0;
  --line: #c0c0c0;
  --edge: #828790;
  --blue: #0078d7;
  --ui: "Noto Sans CJK SC", "Noto Sans", sans-serif;
  --song: "Liberation Serif", "Noto Sans CJK SC", serif;
}

* {
  box-sizing: border-box;
}

body {
  display: flex;
  flex-direction: column;
  height: 100vh;
  margin: 0;
  overflow: hidden;
  font-family: var(--ui);
  font-size: 12px;
  line-height: 16px;
  color: #000;
  background: var(--face);
}

button,
input,
select {
  margin: 0;
  padding: 0;
  border: none;
  font: inherit;
  color: inherit;
  background: none;
}

button {
  display: flex;
  align-items: center;
  flex: none;
  white-space: nowrap;
}

ul {
  margin: 0;
  padding: 0;
  list-style: none;
}

.sheet {
  position: absolute;
  width: 0;
  height: 0;
}

.ico {
  flex: none;
  width: 16px;
  height: 16px;
}

.caret {
  flex: none;
  width: 7px;
  height: 4px;
  background: currentColor;
  clip-path: polygon(0 0, 100% 0, 50% 100%);
}

.sep {
  flex: none;
  width: 1px;
  height: 16px;
  background: #a8a8a8;
}

/* title bar */
.titlebar {
  display: flex;
  align-items: center;
  height: 23px;
  padding-left: 2px;
  gap: 5px;
  background: #fff;
}

.titlebar h1 {
  flex: 1;
  margin: 0;
  overflow: hidden;
  font-family: "Noto Sans", "Noto Sans CJK SC", sans-serif;
  font-size: 12px;
  font-weight: 400;
  white-space: nowrap;
  color: #8c8c8c;
}

.win-controls {
  display: flex;
}

.win-controls button {
  justify-content: center;
  width: 46px;
  height: 20px;
}

.win-controls svg {
  width: 12px;
  height: 12px;
  fill: none;
  stroke: #777;
}

.ime {
  position: absolute;
  z-index: 5;
  top: 4px;
  left: 716px;
  display: flex;
  align-items: center;
  gap: 6px;
  height: 22px;
  padding: 0 3px 0 18px;
  border: 1px solid #a9c6e2;
  background: #fff;
}

.ime b {
  width: 16px;
  font-size: 14px;
  text-align: center;
  white-space: nowrap;
  color: #1f6fc9;
}

.ime-logo {
  position: absolute;
  top: -5px;
  left: -16px;
  width: 28px;
  height: 28px;
}

.bubble {
  position: absolute;
  z-index: 5;
  top: -31px;
  left: 1040px;
  width: 50px;
  height: 50px;
  padding-top: 28px;
  border: 2px solid #ddd;
  border-radius: 50%;
  box-shadow: inset 0 0 0 1px #1c8a3c, 0 1px 5px #666;
  font-family: "DejaVu Sans", sans-serif;
  font-size: 11px;
  font-weight: 700;
  text-align: center;
  color: #fff;
  background: #43c463;
}

/* menus */
.menubar {
  display: flex;
  align-items: center;
  height: 31px;
}

.menus {
  display: flex;
  align-items: center;
  gap: 11px;
  width: 937px;
  padding-left: 5px;
}

.menus button {
  gap: 3px;
}

.menus .extra {
  margin-left: -4px;
}

.menus .caret {
  margin-left: 4px;
}

.news,
.account {
  display: flex;
  align-items: center;
  height: 28px;
  border-radius: 3px;
  background: linear-gradient(#fafafa, #f4f4f4);
}

.news {
  flex: none;
  justify-content: center;
  width: 187px;
  margin-right: 3px;
}

.news a {
  color: #2f6410;
  text-decoration: none;
}

.account {
  flex: 1;
  gap: 9px;
  padding-left: 3px;
}

.account button {
  gap: 4px;
}

.account .caret {
  margin-left: 5px;
}

.more {
  align-self: flex-start;
  margin-left: auto;
  padding-right: 4px;
  font-size: 15px;
  font-weight: 700;
  line-height: 12px;
}

/* toolbars */
.toolbars {
  display: flex;
  height: 29px;
}

.bar {
  display: flex;
  align-items: center;
  gap: 7px;
  height: 28px;
  padding-left: 4px;
  border-radius: 3px;
  background: linear-gradient(#fdfdfd, #ededed);
}

.bar button {
  gap: 4px;
}

.bar button:disabled {
  color: #838383;
}

.bar .more {
  padding-top: 1px;
}

.bar-file {
  width: 152px;
  margin-right: 1px;
}

.bar-draw {
  width: 547px;
  margin-right: 4px;
}

.bar-view {
  flex: 1;
  gap: 6px;
  padding-left: 1px;
}

.sigma {
  width: 16px;
  font-family: "Liberation Serif", serif;
  font-size: 15px;
  text-align: center;
}

.combo {
  display: flex;
  align-items: center;
  flex: none;
  padding-right: 4px;
}

.combo select {
  flex: 1;
  min-width: 0;
  appearance: none;
  opacity: 1;
}

.view-mode {
  width: 62px;
  height: 23px;
  padding-left: 3px;
  gap: 3px;
  border: 1px solid #6a6a6a;
  color: #7a7a7a;
  background: #f4f4f4;
}

.swatch {
  width: 14px;
  height: 10px;
  border: 1px solid #c4c4c4;
  background: #e4e4e4;
}

/* workspace */
.workspace {
  position: relative;
  display: flex;
  flex: 1;
  min-height: 0;
  gap: 6px;
}

.nav {
  display: flex;
  flex-direction: column;
  width: 226px;
  margin-bottom: 2px;
  padding-top: 1px;
  border: 1px solid #a0a0a0;
  border-top: none;
}

.nav-head {
  display: flex;
  align-items: center;
  gap: 6px;
  height: 15px;
  padding-right: 2px;
  border: 1px solid #8a8a8a;
  font-size: 13px;
}

.nav-head span {
  flex: 1;
}

.nav-head svg {
  width: 12px;
  height: 12px;
  fill: none;
  stroke: #000;
}

.nav-tab {
  justify-content: center;
  height: 22px;
  border: 1px solid #a0a0a0;
  border-width: 1px 0 0;
  box-shadow: inset 1px 1px #fff;
}

.nav-head + .nav-tab {
  margin-top: 1px;
}

.nav-tools {
  height: 27px;
  padding: 6px 5px;
  border-top: 1px solid #a0a0a0;
  background: linear-gradient(#fff, #eee);
}

.nav-tools svg {
  width: 40px;
  height: 16px;
}

.tree-box {
  display: flex;
  flex: 1;
  min-height: 0;
  margin: 0 1px 1px;
  border: 1px solid var(--edge);
  background: #fff;
}

.tree {
  flex: 1;
  min-width: 0;
  overflow: hidden;
  padding-top: 2px;
  font-family: var(--song);
  line-height: 16px;
}

.tree li {
  position: relative;
  display: flex;
  align-items: center;
  gap: 6px;
  height: 16px;
  padding-left: 5px;
  white-space: nowrap;
}

.tree .tw {
  width: 12px;
  height: 12px;
}

.tree li.leaf {
  gap: 0;
  padding-left: 42px;
}

.tree .leaf span {
  padding: 0 5px 0 4px;
}

.tree .current .ico,
.tree .current span {
  background: #d9d9d9;
}

/* dotted connectors */
.tree .leaf::before {
  position: absolute;
  top: 0;
  bottom: 0;
  left: 11px;
  width: 21px;
  border: 1px dotted #808080;
  border-width: 0 1px;
  content: "";
}

.tree .leaf::after,
.item-list li::after {
  position: absolute;
  top: 8px;
  left: 32px;
  width: 9px;
  border-top: 1px dotted #808080;
  content: "";
}

.scroll {
  display: flex;
  flex-direction: column;
  flex: none;
  width: 15px;
  margin: 1px;
  background: var(--face);
}

.scroll svg {
  width: 15px;
  height: 16px;
}

.scroll b {
  background: #cdcdcd;
}

.scroll-tree i { flex: 51; }
.scroll-tree b { flex: 250; }
.scroll-tree em { flex: 151; }
.scroll-items i { flex: 285; }
.scroll-items b { flex: 241; }
.scroll-props b { flex: 302; }
.scroll-props em { flex: 228; }

.work {
  display: flex;
  flex: 1;
  flex-direction: column;
  min-width: 0;
}

.bar-item {
  gap: 6px;
}

.bar-item label {
  margin-left: -4px;
}

.bar-item .floor {
  width: 61px;
  height: 22px;
  padding-left: 2px;
  background: #fff;
}

.bar-item .floor + .sep {
  margin-left: -1px;
}

.panes {
  display: flex;
  flex: 1;
  gap: 4px;
  min-height: 0;
}

.items {
  display: flex;
  flex-direction: column;
  width: 199px;
  padding: 4px 0 2px;
}

.find {
  display: flex;
  gap: 1px;
  height: 27px;
  padding: 2px 1px;
  border-right: 1px solid #a0a0a0;
  background: #fff;
}

.find input {
  flex: none;
  width: 172px;
  padding: 0 3px 4px;
  border: 1px solid #7a7a7a;
}

.find input::placeholder {
  color: #777;
}

.find button {
  padding: 0 3px;
}

.items-box {
  display: flex;
  flex: 1;
  min-height: 0;
  border: 1px solid var(--edge);
  border-width: 1px 2px 2px 1px;
  background: #fff;
}

.item-list {
  flex: 1;
  overflow: hidden;
  padding-top: 1px;
  font-family: var(--song);
}

.item-list li {
  position: relative;
  display: flex;
  align-items: center;
  gap: 7px;
  width: max-content;
  height: 16px;
  margin-left: 40px;
  padding: 0 4px;
}

.item-list svg {
  width: 12px;
  height: 12px;
}

.item-list li::before {
  position: absolute;
  top: 0;
  bottom: 0;
  left: -9px;
  border-left: 1px dotted #808080;
  content: "";
}

.item-list li:last-child::before {
  bottom: 8px;
}

.item-list li::after {
  left: -8px;
}

.item-list .selected {
  background: #316ac5;
}

/* properties */
.props {
  display: flex;
  flex: 1;
  flex-direction: column;
  min-width: 0;
  margin-right: 5px;
  padding-bottom: 2px;
  border-right: 1px solid #ccc;
  border-left: 1px solid #ccc;
  background: #fff;
}

.tabs {
  display: flex;
  height: 22px;
  border-bottom: 1px solid #d9d9d9;
}

.tabs button {
  height: 22px;
  padding: 0 7px 0 6px;
  border: 1px solid #d9d9d9;
  border-width: 1px 1px 0 0;
  background: #fff;
}

.props-box {
  display: flex;
  flex: 1;
  min-height: 0;
  margin: 3px 2px 0 3px;
  border: 1px solid #a0a0a0;
}

.props-grid {
  flex: 1;
  min-width: 0;
  padding: 1px;
}

table {
  width: 100%;
  border-spacing: 0;
  table-layout: fixed;
}

th,
td {
  height: 19px;
  padding: 2px 0 0;
  border: 1px solid var(--line);
  border-width: 0 1px 1px 0;
  line-height: 16px;
}

th {
  height: 23px;
  padding: 0;
  font-weight: 400;
  background: linear-gradient(#fff, #ececec);
}

th.num {
  width: 21px;
}

th.name {
  width: 189px;
}

td:first-child {
  padding: 0 0 2px;
  text-align: center;
  background: linear-gradient(#fff, #ececec);
}

td:nth-child(2) {
  position: relative;
  padding-left: 19px;
  font-family: var(--song);
}

td.key {
  color: #00f;
}

td.dim {
  color: #808080;
}

td.sub:nth-child(2) {
  padding-left: 29px;
}

.sub::before,
.sub::after {
  position: absolute;
  top: 0;
  bottom: -1px;
  left: 8px;
  border-left: 1px solid var(--line);
  content: "";
}

.sub.end::before {
  bottom: 9px;
}

.sub::after {
  top: 9px;
  bottom: auto;
  width: 17px;
  border-top: 1px solid var(--line);
  border-left: none;
}

.active td:nth-child(n+2) {
  color: #fff;
  background: var(--blue);
}

.active td:first-child {
  color: #5a1050;
  background: #ffcf86;
}

.box {
  position: absolute;
  top: 3px;
  left: 2px;
  width: 13px;
  height: 13px;
  border: 1px solid #b0b0b0;
  background: linear-gradient(#000, #000) center / 7px 1px no-repeat;
}

.box.plus {
  background: linear-gradient(#000, #000) center / 7px 1px no-repeat, linear-gradient(#000, #000) center / 1px 7px no-repeat;
}

/* floating window */
.dialog {
  position: absolute;
  z-index: 2;
  top: 0;
  right: 22px;
  bottom: 3px;
  left: 648px;
  display: flex;
  flex-direction: column;
  padding: 0 7px 6px;
  border: 1px solid #2c3b4a;
  border-top: none;
  box-shadow: inset -1px -1px #6fd4f0;
  background: linear-gradient(#99b4d1, #b9d1ea 28px);
}

.dialog h2 {
  height: 29px;
  margin: 0;
  padding-top: 9px;
  font-size: 12px;
  font-weight: 400;
}

.dialog-body {
  display: flex;
  flex: 1;
  flex-direction: column;
  min-height: 0;
  border: 1px solid #f8f8f8;
  background: var(--face);
}

.dbar {
  display: flex;
  align-items: center;
  gap: 10px;
  flex: none;
  height: 28px;
  margin: 4px 4px 0;
  padding-left: 3px;
  background: linear-gradient(#fbfbfb, #f0f0f0);
}

.dbar-info {
  gap: 3px;
  margin-top: 0;
  margin-bottom: 2px;
  color: #777;
}

.dbar button:disabled {
  color: #838383;
}

.dbar .sep {
  margin: 0 -2px;
}

.grip {
  width: 2px;
  height: 16px;
  margin-right: -4px;
  background: repeating-linear-gradient(#aaa 0 2px, transparent 2px 4px);
}

.dbar-info .grip {
  margin-right: 2px;
}

.info {
  width: 133px;
  height: 23px;
  border: 1px solid #7a7a7a;
}

.cad {
  display: block;
  flex: 1;
  width: auto;
  min-height: 0;
  margin: 0 3px;
  border: 2px solid #f00;
  border-width: 2px 3px 3px 2px;
  background: #000;
}

.grid {
  fill: none;
  stroke: #303030;
  stroke-dasharray: 9 3 3 3;
}

.axis {
  stroke: #666;
}

.tick {
  font: 12px var(--ui);
  fill: #484848;
}

.stirrup {
  fill: none;
  stroke: #f00;
  stroke-width: 6;
}

.corner {
  fill: #222;
  stroke: #ff0;
  stroke-width: 2;
}

.side {
  fill: #222;
  stroke: #f0f;
  stroke-width: 2;
}

.measure {
  fill: none;
  stroke: #0f0;
  stroke-width: 2;
}

.cn {
  font: 300 27px "Noto Sans CJK SC", sans-serif;
  fill: #fff;
}

.spec {
  font: 24px "Liberation Serif", serif;
  fill: #0f0;
}

.size {
  font: 28px "Liberation Serif", serif;
  fill: #fff;
}

.dstatus {
  display: flex;
  flex: none;
  gap: 3px;
  height: 21px;
  margin-top: 5px;
  font-family: var(--song);
}

.dstatus span {
  padding: 1px 8px;
  border: 1px solid #d4d4d4;
  background: linear-gradient(#fdfdfd, #f0f0f0);
}

.dstatus span:first-child {
  width: 147px;
}

.dstatus span:last-child {
  flex: 1;
  background: radial-gradient(circle, #b0b0b0 1px, transparent 2px) right bottom / 4px 4px no-repeat, linear-gradient(#fdfdfd, #f0f0f0);
}

/* status bar */
.statusbar {
  display: flex;
  gap: 2px;
  height: 22px;
  padding: 1px 0;
  font-family: var(--song);
}

.statusbar span {
  padding: 1px;
  border: 1px solid #d4d4d4;
  background: linear-gradient(#fdfdfd, #f0f0f0);
  white-space: nowrap;
}

.s-hint { width: 148px; }
.s-height { width: 78px; }
.s-base { width: 98px; }
.s-count { width: 48px; }
.s-msg { flex: 1; }
.s-fps { width: 71px; }

/* taskbar */
.taskbar {
  display: flex;
  height: 40px;
  color: #fff;
  background: #000c10;
}

.start {
  justify-content: center;
  width: 48px;
  background: #000;
}

.cortana {
  display: flex;
  align-items: center;
  width: 344px;
  padding: 0 12px 0 8px;
  background: #333;
}

.cortana i {
  width: 21px;
  height: 21px;
  border: 3px solid #fff;
  border-radius: 50%;
}

.cortana input {
  flex: 1;
  min-width: 0;
  padding-left: 7px;
  font-size: 14px;
}

.cortana input::placeholder {
  color: #9a9a9a;
}

.cortana svg {
  width: 16px;
  height: 16px;
  fill: none;
  stroke: #aaa;
}

.apps {
  display: flex;
}

.apps button {
  justify-content: center;
  width: 48px;
  margin-right: 1px;
  border-bottom: 2px solid transparent;
  border-top: 2px solid transparent;
}

.apps button:first-child {
  margin-right: 5px;
}

.apps button.run {
  border-bottom-color: #76b9ed;
}

.apps button.front {
  border-top-color: #343e42;
  background: #343e42;
}

.apps svg {
  width: 24px;
  height: 24px;
}

.tray {
  display: flex;
  flex: 1;
  align-items: center;
  justify-content: flex-end;
  gap: 8px;
  padding-right: 12px;
}

.two {
  line-height: 18px;
  text-align: center;
}

.cpu {
  margin: 0 10px 0 12px;
}

.lang {
  margin: 0 4px 0 3px;
}

.clock {
  margin: 0 12px 0 10px;
}

.kbw {
  width: 24px;
  height: 16px;
}

.notice {
  position: relative;
  width: 28px;
  height: 28px;
}

.notice svg {
  width: 28px;
  height: 28px;
}

.notice b {
  position: absolute;
  top: 11px;
  left: 15px;
  font-weight: 400;
}
```
